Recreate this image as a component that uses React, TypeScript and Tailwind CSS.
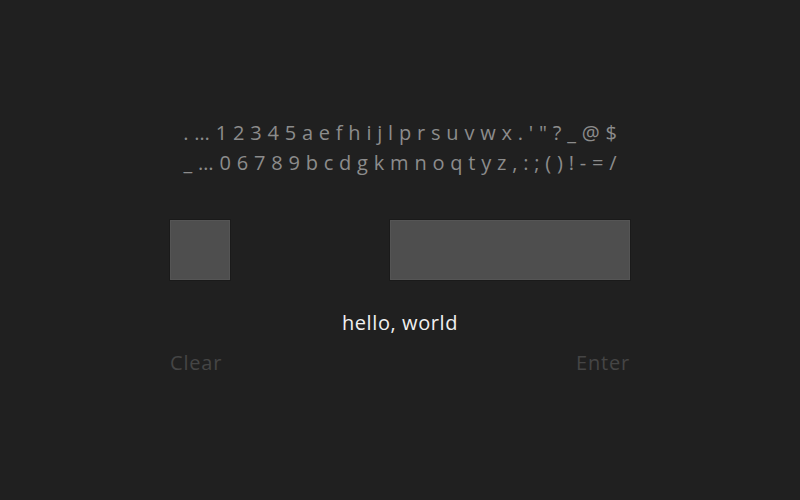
import React from "react";

export default function App() {
  const font = { fontFamily: '"Open Sans", "DejaVu Sans", sans-serif' };
  return (
    <div className="w-[800px] h-[500px] bg-[#202020] flex flex-col items-center" style={font}>
      <div className="mt-[118px] pl-[6px] flex flex-col items-center text-[20px] leading-[30px] tracking-[0.29em] text-[#8c8c8c]">
        <div>.…12345aefhijlprsuvwx.'"?_@$</div>
        <div>_…06789bcdgkmnoqtyz,:;()!-=/</div>
      </div>
      <div className="mt-[42px] w-[460px] flex justify-between">
        <div className="w-[60px] h-[60px] bg-[#4e4e4e] border border-[#555] shadow-[0_0_0_1px_#1a1a1a]" />
        <div className="w-[240px] h-[60px] bg-[#4e4e4e] border border-[#555] shadow-[0_0_0_1px_#1a1a1a]" />
      </div>
      <div className="mt-[30px] text-[20px] leading-[26px] tracking-[0.03em] text-[#f0f0f0]">hello, world</div>
      <div className="mt-[14px] w-[460px] flex justify-between text-[20px] leading-[26px] tracking-[0.04em] text-[#454545]">
        <span>Clear</span>
        <span>Enter</span>
      </div>
    </div>
  );
}
